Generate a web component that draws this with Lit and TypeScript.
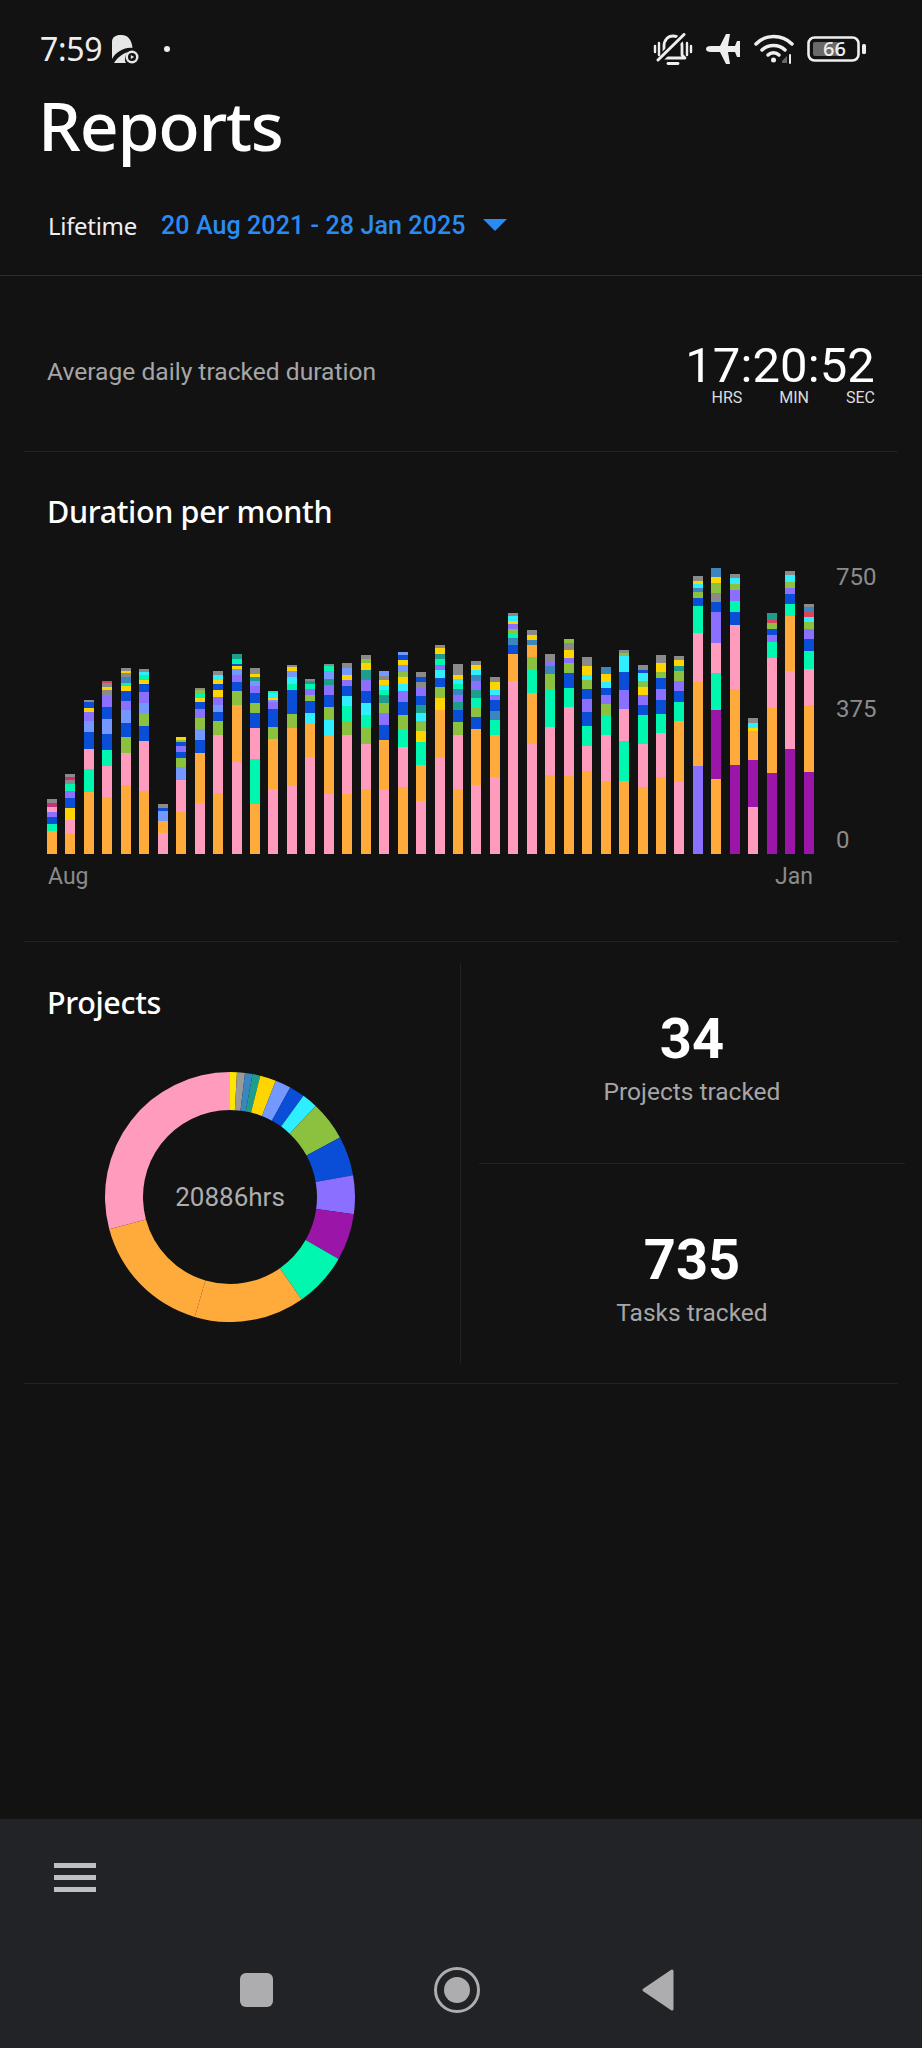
import { LitElement, css, html, svg } from "lit";
import { customElement } from "lit/decorators.js";

const COLORS: Record<string, string> = {
	O: "#ffab3b",
	P: "#ff9bbd",
	M: "#00f7b0",
	B: "#0a4dd6",
	V: "#8b6fff",
	L: "#7398ff",
	G: "#8cc03f",
	C: "#2eeeff",
	Y: "#ffd500",
	U: "#9b16a8",
	T: "#1f9d8c",
	S: "#3c86c0",
	A: "#8a8a8a",
	R: "#d8455a",
	K: "#c92f78",
};

// each bar from the bottom up: colour, then top edge measured on a 3x crop (baseline 908)
const BARS = [
	"O840 M817 B797 V782 P768 K755 A743",
	"O847 P806 Y770 B741 V720 M698 A685 K676 A668",
	"O723 M654 P593 B543 L509 V481 Y470 B452 A445",
	"O736 P645 M595 B548 L502 B467 V433 A415 Y407 A395 R388",
	"O701 P606 G556 B514 L477 V450 B420 Y405 M395 S378 A365 Y358 A350",
	"O718 P570 B525 G488 L455 V422 B397 Y385 M370 C362 A353",
	"P845 O808 L779 B771 A758",
	"O781 P687 L648 G621 B602 V585 B572 G565 Y558",
	"P755 O605 B567 L533 G500 V474 B453 Y440 M428 G415 A409",
	"O724 P551 G510 B482 L460 V438 Y417 B398 Y385 C370 A360",
	"P632 O461 G419 B391 V370 L352 Y345 B338 M322 T308",
	"O758 M624 P529 B486 G456 B426 V403 L390 T376 Y367 A350",
	"P713 O564 G528 B473 V452 L447 Y440 C425 M420",
	"P703 O530 G488 B417 M397 C377 L360 Y346 A340",
	"P617 O519 C484 B450 G430 V412 M398 T390 A384",
	"P727 O551 C506 G467 B432 V400 T382 L360 M345 A338",
	"O729 P551 G509 M465 C434 B404 V385 Y372 L350 A335",
	"O712 P577 G530 M490 C455 B418 V386 T355 Y335 G322 A312",
	"P715 O567 B520 V486 G455 T432 M415 C400 Y387 A375 L358",
	"O706 P587 M533 G490 B453 V420 C398 Y378 G362 L342 Y327 B312 L303",
	"P749 O642 M572 Y540 G510 C486 T460 B433 V410 A392 B378 A362",
	"P620 O475 Y441 G408 B380 C356 V340 M322 T308 Y290 A280",
	"O712 P551 G511 B475 T452 V430 S412 M397 C383 Y372 A352 A338",
	"P700 O533 B497 G469 M441 T415 V390 S372 C355 Y342 A330",
	"P677 O550 M507 S478 B445 V430 C415 Y392 A376",
	"P389 O308 B282 S260 M245 G232 V218 Y208 C195 A186",
	"P577 O424 M353 G317 O282 S265 Y250 A236",
	"O670 P528 M414 G368 S345 V330 A308",
	"O673 P468 M411 B366 G335 V320 Y295 A275 G262",
	"O660 P584 M525 B481 V444 B413 G385 C370 Y345 A318",
	"O688 P551 M492 G458 V430 B410 C392 Y368 S346",
	"O688 M570 P474 V415 B361 C315 G305 A296",
	"O708 P577 M492 B460 V432 Y408 G390 C365 B355 A342",
	"O676 P544 M488 B447 V412 B381 G361 Y335 A310",
	"P692 O510 M451 B419 V390 G358 T345 Y325 A314",
	"V644 O393 P245 M165 B140 G123 S110 C98 Y90 A74",
	"O682 U476 M365 P275 V183 B152 A125 G96 Y78 S50",
	"U642 O412 P220 B183 M150 V117 G97 C80 A67",
	"P767 U625 O540 Y530 C515 A500",
	"U664 O471 P320 M271 V250 B232 G215 R203 T184",
	"U593 P358 O193 M158 B127 V110 G92 C72 A58",
	"U661 O460 P354 M300 B263 V233 G213 C197 R183 S168 A157",
];

// clockwise from 12 o'clock, [end angle, colour]
const DONUT: [number, string][] = [
	[3.2, "#ffe600"],
	[6.9, "#9a9a9a"],
	[10.4, "#3c86c0"],
	[14, "#1f9d8c"],
	[21.5, "#ffd500"],
	[28.8, "#7398ff"],
	[36, "#0a4dd6"],
	[43.3, "#2eeeff"],
	[61.6, "#8cc03f"],
	[80, "#0a4dd6"],
	[97.9, "#8b6fff"],
	[119.7, "#9b16a8"],
	[145, "#00f7b0"],
	[196.4, "#ffab3b"],
	[255, "#ffab3b"],
	[360, "#ff9bbd"],
];

function polar(r: number, deg: number) {
	const a = (deg * Math.PI) / 180;
	return `${(125 + r * Math.sin(a)).toFixed(2)} ${(125 - r * Math.cos(a)).toFixed(2)}`;
}

function donutPath(from: number, to: number) {
	const large = to - from > 180 ? 1 : 0;
	return `M${polar(125, from)} A125 125 0 ${large} 1 ${polar(125, to)} L${polar(87, to)} A87 87 0 ${large} 0 ${polar(87, from)} Z`;
}

@customElement("app-root")
export class AppRoot extends LitElement {
	static styles = css`
		:host {
			display: flex;
			flex-direction: column;
			height: 2048px;
			background: #121213;
			color: #fff;
			font-family: Roboto, sans-serif;
			overflow: hidden;
		}

		.status {
			display: flex;
			align-items: center;
			height: 64px;
			padding: 34px 56px 0 40px;
			box-sizing: border-box;
			flex: none;
		}

		.clock {
			font: 400 32px/1 "Noto Sans", sans-serif;
			color: #eee;
			letter-spacing: -0.3px;
			margin-right: 9px;
		}

		.dot {
			width: 6px;
			height: 6px;
			border-radius: 50%;
			background: #eee;
			margin-left: 25px;
		}

		.status-right {
			margin-left: auto;
			display: flex;
			align-items: center;
			gap: 13px;
		}

		.battery {
			position: relative;
			width: 59px;
			height: 26px;
			display: block;
		}

		.battery span {
			position: absolute;
			left: 16px;
			top: 2px;
			font: 500 20px/22px "Noto Sans", sans-serif;
			color: #eee;
		}

		h1 {
			margin: 19px 0 0 38px;
			font: 500 68px/84px "Noto Sans", sans-serif;
			letter-spacing: -1.3px;
			color: #fff;
		}

		.range {
			display: flex;
			align-items: center;
			height: 40px;
			margin-top: 38px;
			padding-left: 48px;
			font-size: 25px;
		}

		.range .life {
			font-family: "Noto Sans", sans-serif;
			font-size: 24px;
			color: #eee;
			letter-spacing: -0.3px;
			margin-right: 24px;
		}

		.range .dates {
			font-weight: 500;
			color: #2a8bf2;
			letter-spacing: 0.1px;
			margin-right: 17px;
		}

		.arrow {
			width: 0;
			height: 0;
			border-left: 12px solid transparent;
			border-right: 12px solid transparent;
			border-top: 12px solid #2a8bf2;
		}

		.rule-full {
			height: 1px;
			background: #2c2c2d;
			margin-top: 30px;
			flex: none;
		}

		.rule {
			height: 1px;
			background: #222223;
			margin: 0 24px;
			flex: none;
		}

		.avg {
			display: flex;
			justify-content: space-between;
			align-items: center;
			height: 175px;
			padding: 16px 47px 0;
			box-sizing: border-box;
		}

		.avg-label {
			font-size: 24.6px;
			color: #a6a6a6;
			margin-top: -1px;
		}

		.timer {
			display: flex;
			flex-direction: column;
			margin-top: 6px;
		}

		.timer-value {
			font-size: 49px;
			font-weight: 400;
			line-height: 46px;
			color: #fff;
			letter-spacing: 0.1px;
		}

		.timer-units {
			display: flex;
			justify-content: flex-end;
			gap: 37px;
			font-size: 16px;
			line-height: 18px;
			color: #ddd;
		}

		h2 {
			margin: 0;
			font: 500 30.5px/40px "Noto Sans", sans-serif;
			letter-spacing: -0.35px;
			color: #fff;
		}

		.duration {
			padding: 39px 47px 0 47px;
			height: 489px;
			box-sizing: border-box;
		}

		.plot {
			display: flex;
			margin-top: 31px;
			height: 310px;
		}

		.bars {
			display: flex;
			align-items: flex-end;
			gap: 8.46px;
			width: 766px;
			height: 292px;
			flex: none;
		}

		.bar {
			width: 10px;
			display: flex;
			flex-direction: column-reverse;
			flex: none;
		}

		.y-axis {
			display: flex;
			flex-direction: column;
			justify-content: space-between;
			height: 291px;
			margin: 1px 0 0 23px;
			font-size: 24px;
			line-height: 28px;
			color: #8b8b8b;
			width: 40px;
		}

		.x-axis {
			display: flex;
			justify-content: space-between;
			width: 766px;
			padding-left: 1px;
			box-sizing: border-box;
			font-size: 23px;
			line-height: 28px;
			color: #8b8b8b;
			margin-top: 9px;
		}

		.projects {
			display: grid;
			grid-template-columns: 437px 1fr;
			padding: 21px 17px 19px 24px;
			height: 441px;
			box-sizing: border-box;
		}

		.donut-col {
			border-right: 1px solid #222223;
			padding: 19px 0 0 23px;
		}

		.donut {
			position: relative;
			width: 250px;
			height: 250px;
			margin: 50px 0 0 58px;
		}

		.donut svg {
			display: block;
		}

		.donut span {
			position: absolute;
			inset: 0;
			display: flex;
			align-items: center;
			justify-content: center;
			font-size: 26px;
			color: #adadad;
		}

		.stats {
			display: flex;
			flex-direction: column;
			padding-left: 18px;
		}

		.stat {
			height: 200px;
			display: flex;
			flex-direction: column;
			align-items: center;
			box-sizing: border-box;
		}

		.stat + .stat {
			border-top: 1px solid #222223;
			padding-top: 62px;
		}

		.stat:first-child {
			padding-top: 42px;
		}

		.stat b {
			font-size: 56px;
			font-weight: 700;
			line-height: 68px;
		}

		.stat span {
			font-size: 24.5px;
			line-height: 30px;
			color: #a6a6a6;
			margin-top: 4px;
		}

		.spacer {
			flex: 1;
		}

		.bottom {
			background: #222327;
			height: 229px;
			flex: none;
			display: flex;
			flex-direction: column;
		}

		.menu {
			display: flex;
			flex-direction: column;
			gap: 7px;
			margin: 44px 0 0 54px;
			width: 42px;
		}

		.menu i {
			height: 5px;
			background: #c0c0c3;
		}

		.nav {
			display: flex;
			align-items: center;
			margin: 75px 0 0 240px;
			height: 46px;
		}

		.nav-square {
			width: 33px;
			height: 34px;
			border-radius: 6px;
			background: #adadb0;
		}

		.nav-home {
			margin-left: 161px;
			display: block;
		}

		.nav-back {
			margin-left: 162px;
			display: block;
		}
	`;

	private renderBar(spec: string) {
		let prev = 908;
		const parts = spec.split(" ").map((s) => {
			const top = Number(s.slice(1));
			const h = (prev - top) / 3;
			prev = top;
			return html`<div style="height:${h.toFixed(2)}px;background:${COLORS[s[0]]}"></div>`;
		});
		return html`<div class="bar">${parts}</div>`;
	}

	private renderDonut() {
		let from = 0;
		return html`<svg width="250" height="250" viewBox="0 0 250 250">
			${DONUT.map(([to, color]) => {
				const d = donutPath(from, to);
				from = to;
				return svg`<path d=${d} fill=${color}></path>`;
			})}
		</svg>`;
	}

	private renderStatus() {
		return html`<div class="status">
			<span class="clock">7:59</span>
			<svg width="28" height="30" viewBox="0 0 28 30">
				<path d="M1 25V8C1 3 5 1 9 1H11C16 1 20 5 21 11L21.500 14C14 13 6 17 1 25Z" fill="#e6e6e6"></path>
				<path d="M3 29C6 24 11 20 17 18C14 21 13 26 15 29Z" fill="#e6e6e6"></path>
				<circle cx="21" cy="23" r="6.500" fill="#e6e6e6"></circle>
				<circle cx="21" cy="23" r="4" fill="#121213"></circle>
				<path d="M19.800 21L23.200 23L19.800 25Z" fill="#e6e6e6"></path>
			</svg>
			<span class="dot"></span>
			<div class="status-right">
				<svg width="40" height="33" viewBox="0 0 40 33" fill="none" stroke="#eee">
					<path d="M11 22V13C11 7 15 3 20 3C25 3 29 7 29 13V22L32 25H8Z" stroke-width="2.800" stroke-linejoin="round"></path>
					<path d="M5 28L32 1" stroke="#121213" stroke-width="7"></path>
					<path d="M5 27L31 1.500" stroke-width="3" stroke-linecap="round"></path>
					<path d="M15 30.500H25" stroke-width="2.800" stroke-linecap="round"></path>
					<path d="M2 13V19M6 10V22M34 10V22M38 13V19" stroke-width="2.400" stroke-linecap="round"></path>
				</svg>
				<svg width="35" height="32" viewBox="0 0 35 32">
					<path d="M0 16Q0 13 5 13L14 13L20 1L24 1L22 13L29 13L31 8L34 8L34 24L31 24L29 19L22 19L24 31L20 31L14 19L5 19Q0 19 0 16Z" fill="#eee"></path>
				</svg>
				<svg width="40" height="30" viewBox="0 0 40 30" fill="none" stroke="#eee" stroke-width="3.500" stroke-linecap="round">
					<path d="M2 10C11 0 28 0 38 10"></path>
					<path d="M8 16C14 10 25 10 31 16"></path>
					<path d="M14 21C17 18 22 18 25 21"></path>
					<circle cx="19.500" cy="26" r="2.500" fill="#eee" stroke="none"></circle>
					<path d="M28 27L33 22V29H28Z" fill="#666" stroke="none"></path>
					<path d="M36 21V29" stroke-width="2"></path>
				</svg>
				<span class="battery">
					<svg width="59" height="26" viewBox="0 0 59 26">
						<rect x="1.500" y="1.500" width="50" height="23" rx="6" fill="none" stroke="#eee" stroke-width="2.600"></rect>
						<rect x="6" y="6" width="26" height="14" rx="2" fill="#6a6a6a"></rect>
						<rect x="55" y="8" width="4" height="10" rx="1.500" fill="#eee"></rect>
					</svg>
					<span>66</span>
				</span>
			</div>
		</div>`;
	}

	render() {
		return html`
			${this.renderStatus()}
			<h1>Reports</h1>
			<div class="range">
				<span class="life">Lifetime</span>
				<span class="dates">20 Aug 2021 - 28 Jan 2025</span>
				<span class="arrow"></span>
			</div>
			<div class="rule-full"></div>

			<section class="avg">
				<span class="avg-label">Average daily tracked duration</span>
				<div class="timer">
					<span class="timer-value">17:20:52</span>
					<div class="timer-units"><span>HRS</span><span>MIN</span><span>SEC</span></div>
				</div>
			</section>
			<div class="rule"></div>

			<section class="duration">
				<h2>Duration per month</h2>
				<div class="plot">
					<div>
						<div class="bars">${BARS.map((b) => this.renderBar(b))}</div>
						<div class="x-axis"><span>Aug</span><span>Jan</span></div>
					</div>
					<div class="y-axis"><span>750</span><span>375</span><span>0</span></div>
				</div>
			</section>
			<div class="rule"></div>

			<section class="projects">
				<div class="donut-col">
					<h2>Projects</h2>
					<div class="donut">
						${this.renderDonut()}
						<span>20886hrs</span>
					</div>
				</div>
				<div class="stats">
					<div class="stat"><b>34</b><span>Projects tracked</span></div>
					<div class="stat"><b>735</b><span>Tasks tracked</span></div>
				</div>
			</section>
			<div class="rule"></div>

			<div class="spacer"></div>
			<footer class="bottom">
				<div class="menu"><i></i><i></i><i></i></div>
				<div class="nav">
					<div class="nav-square"></div>
					<svg class="nav-home" width="46" height="46" viewBox="0 0 46 46">
						<circle cx="23" cy="23" r="21.500" fill="none" stroke="#adadb0" stroke-width="3"></circle>
						<circle cx="23" cy="23" r="13" fill="#adadb0"></circle>
					</svg>
					<svg class="nav-back" width="32" height="42" viewBox="0 0 32 42">
						<path d="M30 2V40L2 21Z" fill="#adadb0" stroke="#adadb0" stroke-width="3" stroke-linejoin="round"></path>
					</svg>
				</div>
			</footer>
		`;
	}
}
